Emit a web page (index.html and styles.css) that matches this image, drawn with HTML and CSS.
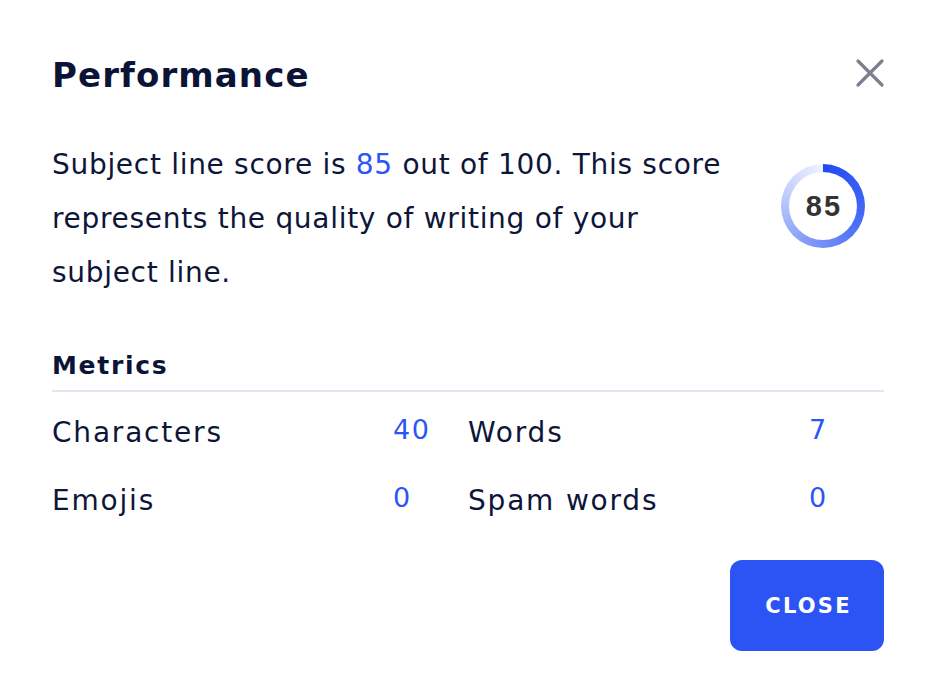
FILE: index.html
```html
<!DOCTYPE html>
<html lang="en">
<head>
<meta charset="utf-8">
<title>Performance</title>
<link rel="stylesheet" href="styles.css">
</head>
<body>
<div class="dialog">
  <div class="header">
    <h1 class="title">Performance</h1>
    <button class="icon-close" aria-label="Close">
      <svg width="30" height="30" viewBox="0 0 30 30"><path d="M3 3 L27 27 M27 3 L3 27" stroke="#7b7f8f" stroke-width="3.2" stroke-linecap="round" fill="none"/></svg>
    </button>
  </div>
  <div class="summary">
    <p class="desc">Subject line score is <span class="accent">85</span> out of 100. This score represents the quality of writing of your subject line.</p>
    <div class="ring"><div class="ring-inner">85</div></div>
  </div>
  <h2 class="metrics-title">Metrics</h2>
  <div class="metrics">
    <div class="metric"><span class="label">Characters</span><span class="value">40</span></div>
    <div class="metric"><span class="label">Words</span><span class="value">7</span></div>
    <div class="metric"><span class="label">Emojis</span><span class="value">0</span></div>
    <div class="metric"><span class="label">Spam words</span><span class="value">0</span></div>
  </div>
  <div class="footer">
    <button class="btn-close">CLOSE</button>
  </div>
</div>
</body>
</html>
```
FILE: styles.css
```css
* { box-sizing: border-box; }
html, body { margin: 0; background: #ffffff; }
body { font-family: "DejaVu Sans", "Liberation Sans", sans-serif; color: #0d1638; }
.dialog { width: 936px; height: 680px; padding: 53px 52px 0 52px; }
.header { display: flex; justify-content: space-between; align-items: center; height: 44px; }
.title { margin: 0; font-size: 34px; font-weight: 700; color: #0b1437; letter-spacing: 1.1px; }
.icon-close { border: 0; background: none; padding: 0; width: 30px; height: 30px; margin-right: -1px; margin-top: -5px; }
.icon-close svg { display: block; }
.summary { display: flex; justify-content: space-between; align-items: flex-start; margin-top: 41px; }
.desc { margin: 0; width: 690px; font-size: 28px; line-height: 54px; letter-spacing: 0.7px; color: #0d1638; }
.accent { color: #2b55f6; }
.ring { width: 84px; height: 84px; border-radius: 50%; margin-top: 26px; margin-right: 19px;
  background: conic-gradient(from 0deg, #2349f4 0deg, #4b6ff6 120deg, #8ea4f8 220deg, #c9d4fb 300deg, #eef2fe 358deg);
  display: flex; align-items: center; justify-content: center; }
.ring-inner { width: 68px; height: 68px; border-radius: 50%; background: #fff; display: flex; align-items: center; justify-content: center;
  font-family: "Liberation Sans", Arial, sans-serif; font-weight: 700; font-size: 29px; color: #333333; letter-spacing: 2px; padding-left: 2px; }
.metrics-title { margin: 48px 0 0 0; font-size: 25px; font-weight: 700; color: #0b1437; line-height: 36px; letter-spacing: 1.7px; padding-bottom: 6px; border-bottom: 2px solid #e3e6f1; }
.metrics { display: grid; grid-template-columns: 1fr 1fr; row-gap: 26px; margin-top: 20px; }
.metric { display: grid; grid-template-columns: 341px 1fr; align-items: start; height: 42px; }
.label { font-size: 28px; line-height: 42px; letter-spacing: 1.8px; color: #0d1638; }
.value { font-size: 27px; line-height: 36px; letter-spacing: 1.5px; color: #2b55f6; }
.footer { display: flex; justify-content: flex-end; margin-top: 38px; }
.btn-close { width: 154px; height: 91px; border: 0; border-radius: 12px; background: #2c54f5; color: #fff;
  font-family: "DejaVu Sans", "Liberation Sans", sans-serif; font-weight: 700; font-size: 21px; letter-spacing: 2.2px; padding: 0 0 0 3px; }
```
